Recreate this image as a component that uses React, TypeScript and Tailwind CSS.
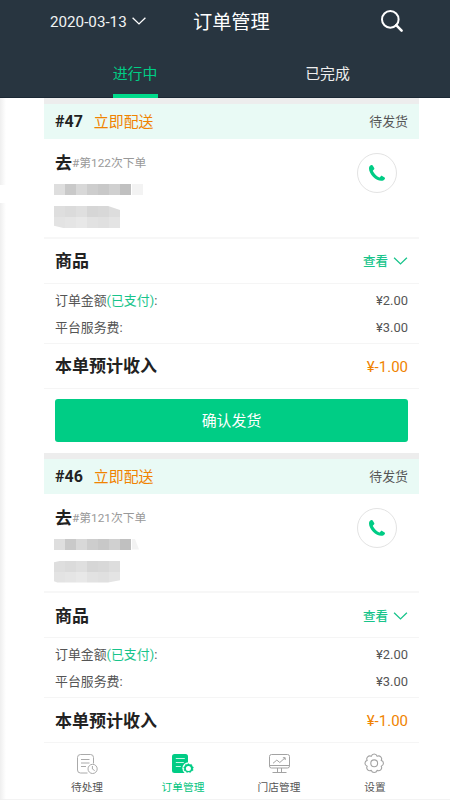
import { ReactNode } from "react";
import clsx from "clsx";

type Order = {
  id: number;
  times: number;
  nameTail: string;
  addressClip: string;
  canConfirm: boolean;
};

const orders: Order[] = [
  {
    id: 47,
    times: 122,
    nameTail: "w-[11px]",
    addressClip:
      "[clip-path:polygon(0_0,82%_0,100%_18%,100%_100%,14%_100%,0_90%)]",
    canConfirm: true,
  },
  {
    id: 46,
    times: 121,
    nameTail: "w-[7px] [clip-path:polygon(0_0,40%_0,100%_100%,0_100%)]",
    addressClip:
      "[clip-path:polygon(0_8%,12%_0,100%_0,100%_90%,82%_100%,5%_100%,0_94%)]",
    canConfirm: false,
  },
];

// Masked customer info
const nameBlocks = [
  "bg-[#dedede]",
  "bg-[#c9c9c9]",
  "bg-[#d8d8d8]",
  "bg-[#cdcdcd]",
  "bg-[#c8c8c8]",
  "bg-[#d0d0d0]",
  "bg-[#c0c0c0]",
];
const addressBlocks = [
  "bg-[#dedede]",
  "bg-[#dbdbdb]",
  "bg-[#dfdfdf]",
  "bg-[#d6d6d6]",
  "bg-[#d8d8d8]",
  "bg-[#dddddd]",
  "bg-[#e3e3e3]",
  "bg-[#e5e5e5]",
  "bg-[#e8e8e8]",
  "bg-[#e2e2e2]",
  "bg-[#e0e0e0]",
  "bg-[#e4e4e4]",
];

function Chevron({ className }: { className: string }) {
  return (
    <svg className={className} viewBox="0 0 14 8" fill="none" stroke="currentColor">
      <path d="M0.6 0.7 7 6.9 13.4 0.7" strokeWidth="1.3" />
    </svg>
  );
}

function SearchIcon() {
  return (
    <svg className="w-6 h-6" viewBox="0 0 24 24" fill="none" stroke="currentColor">
      <circle cx="10.3" cy="9.4" r="8.3" strokeWidth="2" />
      <path d="M16.2 15.2 21.6 20.6" strokeWidth="2.6" strokeLinecap="round" />
    </svg>
  );
}

function PhoneIcon() {
  return (
    <svg className="w-4 h-4" viewBox="0 0 16 16" fill="currentColor">
      <path d="M2.4 0C.8.4 0 1.7 0 3.6c0 2.6 1.5 5.6 4 8.2s5.6 4 8.2 4c1.900 0 3.300-.9 3.800-2.300.1-.4 0-.8-.4-1.100l-2.400-1.400c-.5-.3-1-.2-1.400.2l-.9 1c-.3.3-.6.3-1 .1C7.600 11.200 5.200 8.800 4 6.300c-.2-.4-.1-.7.2-1l.8-.9c.4-.4.5-.9.2-1.400L3.700.6C3.400.1 2.900-.1 2.400 0Z" />
    </svg>
  );
}

function PendingIcon() {
  return (
    <svg className="w-[22px] h-[22px]" viewBox="0 0 22 22" fill="none" stroke="#aaa" strokeWidth="1">
      <path d="M11.5 20H4.500a3 3 0 0 1-3-3V4.500a3 3 0 0 1 3-3h10a3 3 0 0 1 3 3v6" />
      <path d="M5 6.500h8.500M5 10h8.500M5 13.500h5" />
      <circle cx="16.600" cy="15.900" r="4.600" />
      <path d="M16.400 13v3l2.300 1.600" />
    </svg>
  );
}

function OrdersIcon() {
  return (
    <svg className="w-[22px] h-[22px]" viewBox="0 0 22 22" fill="none">
      <rect x="0" y="1" width="16" height="19" rx="2.5" fill="#00cc85" />
      <path d="M3.8 5.500h9M3.8 9.500h8M3.8 13.500h5" stroke="#c5f6e3" strokeWidth="1.200" />
      <circle cx="16.400" cy="15.200" r="6" fill="#fff" />
      <path
        d="m15 11.600 1.400-1.100 1.400 1.100 1.800-.2.600 1.800 1.300 1-.7 1.400.3 1.800-1.700.6-1 1.500-1.800-.6-1.800.6-1.100-1.500-1.700-.6.300-1.800-.7-1.400 1.300-1 .6-1.800Z"
        fill="#00cc85"
        stroke="#00cc85"
        strokeWidth=".4"
        strokeLinejoin="round"
      />
      <circle cx="16.400" cy="15.400" r="2.500" fill="#fff" />
    </svg>
  );
}

function StoreIcon() {
  return (
    <svg className="w-[22px] h-[22px]" viewBox="0 0 22 22" fill="none" stroke="#a3a3a3" strokeWidth="1">
      <rect x="1.500" y="1.500" width="20" height="13.500" rx="2" />
      <path d="M1.500 12.500h20M9.500 15v4.500M13.500 15v4.500M4.500 19.500h14" />
      <path d="m5 10.300 3.800-3.200 3 2.400L17 4.900" />
      <path d="M14.900 4.700h2.300v2.300" />
    </svg>
  );
}

function SettingsIcon() {
  return (
    <svg className="w-[22px] h-[22px]" viewBox="0 0 22 22" fill="none" stroke="#a3a3a3" strokeWidth="1.1">
      <path
        d="M7.300 3.300a3 3 0 0 1 5.800 0a3 3 0 0 1 4.100 4.100a3 3 0 0 1 0 5.800a3 3 0 0 1-4.100 4.100a3 3 0 0 1-5.800 0a3 3 0 0 1-4.100-4.100a3 3 0 0 1 0-5.800a3 3 0 0 1 4.100-4.100Z"
        strokeLinejoin="round"
      />
      <circle cx="10.200" cy="10.300" r="3.400" />
    </svg>
  );
}

function OrderCard({ order }: { order: Order }) {
  return (
    <div className="w-[375px] ml-11">
      <div className="h-1.5 bg-[#ededed]" />
      <div className="h-[35px] px-[11px] flex items-center bg-[#e9faf5]">
        <span className="pt-px text-[16px] font-bold text-[#222]">#{order.id}</span>
        <span className="ml-[11px] pt-0.5 text-[14.9px] text-[#f08300]">立即配送</span>
        <span className="ml-auto pt-px text-[12.9px] text-[#555]">待发货</span>
      </div>

      {/* Customer */}
      <div className="h-[99.5px] px-[11px] flex justify-between border-b-2 border-[#f7f7f7]">
        <div className="pt-3">
          <div className="h-6 flex items-center">
            <span className="text-[17px] leading-6 font-bold text-[#222]">去</span>
            <span className="text-[11.8px] leading-6 text-[#999]">#第{order.times}次下单</span>
          </div>
          <div className="mt-[9px] -ml-px flex">
            {nameBlocks.map((color, i) => (
              <div key={i} className={clsx("w-[11px] h-[11px]", color)} />
            ))}
            <div className={clsx("ml-px h-[11px] bg-[#f3f3f3]", order.nameTail)} />
          </div>
          <div className={clsx("mt-[11px] -ml-px w-[66px] grid grid-cols-6", order.addressClip)}>
            {addressBlocks.map((color, i) => (
              <div key={i} className={clsx("h-[11px]", color)} />
            ))}
          </div>
        </div>
        <button className="mt-3.5 mr-[11px] w-10 h-10 rounded-full border border-[#e3e3e3] flex items-center justify-center text-[#00cc85]">
          <PhoneIcon />
        </button>
      </div>

      {/* Goods */}
      <div className="h-[45px] px-[11px] pt-[3px] flex items-center border-b border-[#f5f5f5]">
        <span className="text-[17px] font-bold text-[#222]">商品</span>
        <span className="ml-auto pt-px text-[12.5px] font-medium text-[#18c48b]">查看</span>
        <Chevron className="ml-[5px] mb-0.5 w-[15px] h-2 text-[#18c48b]" />
      </div>

      {/* Fees */}
      <div className="h-[60px] px-[11px] pt-[3px] text-[12.9px] leading-[27px] text-[#555] border-b border-[#f5f5f5]">
        <div className="flex justify-between">
          <span>
            订单金额<span className="text-[#18c48b]">(已支付)</span>:
          </span>
          <span>¥2.00</span>
        </div>
        <div className="flex justify-between">
          <span>平台服务费:</span>
          <span>¥3.00</span>
        </div>
      </div>
      <div className="h-[45px] px-[11px] pt-[3px] flex items-center justify-between border-b border-[#f5f5f5]">
        <span className="text-[17px] font-bold text-[#222]">本单预计收入</span>
        <span className="text-[15px] text-[#f08300]">¥-1.00</span>
      </div>

      {order.canConfirm && (
        <div className="h-16 px-[11px] pt-2.5">
          <button className="w-full h-[43px] pt-0.5 rounded-[3px] bg-[#00cd85] text-[14.9px] text-white">
            确认发货
          </button>
        </div>
      )}
    </div>
  );
}

function NavItem({ icon, label, active }: { icon: ReactNode; label: string; active?: boolean }) {
  return (
    <div className="w-24 pt-2.5 flex flex-col items-center">
      {icon}
      <span
        className={clsx(
          "mt-[5px] text-[10.7px] leading-4",
          active ? "text-[#00c480]" : "text-[#555]"
        )}
      >
        {label}
      </span>
    </div>
  );
}

export default function App() {
  return (
    <div className="relative w-[450px] h-[800px] overflow-hidden flex flex-col bg-white font-['Roboto','Noto_Sans_CJK_SC',sans-serif]">
      <header className="h-[98px] shrink-0 flex flex-col bg-[#283540] border-b border-[#1b2834] text-white">
        <div className="h-11 grid grid-cols-[193px_1fr_auto] items-center">
          <div className="pl-[50px] flex items-center">
            <span className="text-[15.2px] text-[#f0f2f3]">2020-03-13</span>
            <Chevron className="ml-[5px] mb-px w-3.5 h-2" />
          </div>
          <h1 className="pt-0.5 text-[19.2px]">订单管理</h1>
          <button className="mr-[46px]">
            <SearchIcon />
          </button>
        </div>
        <div className="flex-1 ml-[39px] flex text-[14.9px]">
          <div className="w-48 flex flex-col items-center">
            <div className="pt-[19px] leading-[22px] flex-1 text-[#00cd85]">进行中</div>
            <div className="w-[45px] h-1 -mb-px bg-[#00db8b]" />
          </div>
          <div className="w-[193px] pt-[19px] leading-[22px] text-center text-[#eee]">已完成</div>
        </div>
      </header>

      <main className="flex-1 min-h-0 overflow-hidden">
        {orders.map((order) => (
          <OrderCard key={order.id} order={order} />
        ))}
      </main>

      <nav className="h-[57px] shrink-0 pl-[39px] flex bg-white border-b border-[#f3f3f3]">
        <NavItem icon={<PendingIcon />} label="待处理" />
        <NavItem icon={<OrdersIcon />} label="订单管理" active />
        <NavItem icon={<StoreIcon />} label="门店管理" />
        <NavItem icon={<SettingsIcon />} label="设置" />
      </nav>

      {/* Soft shade on the left edge, open around the notch */}
      <div className="absolute left-0 top-[98px] w-1.5 h-[87px] bg-linear-to-r from-[#efefef] to-transparent" />
      <div className="absolute left-0 top-[203px] w-1.5 bottom-0 bg-linear-to-r from-[#efefef] to-transparent" />
    </div>
  );
}
